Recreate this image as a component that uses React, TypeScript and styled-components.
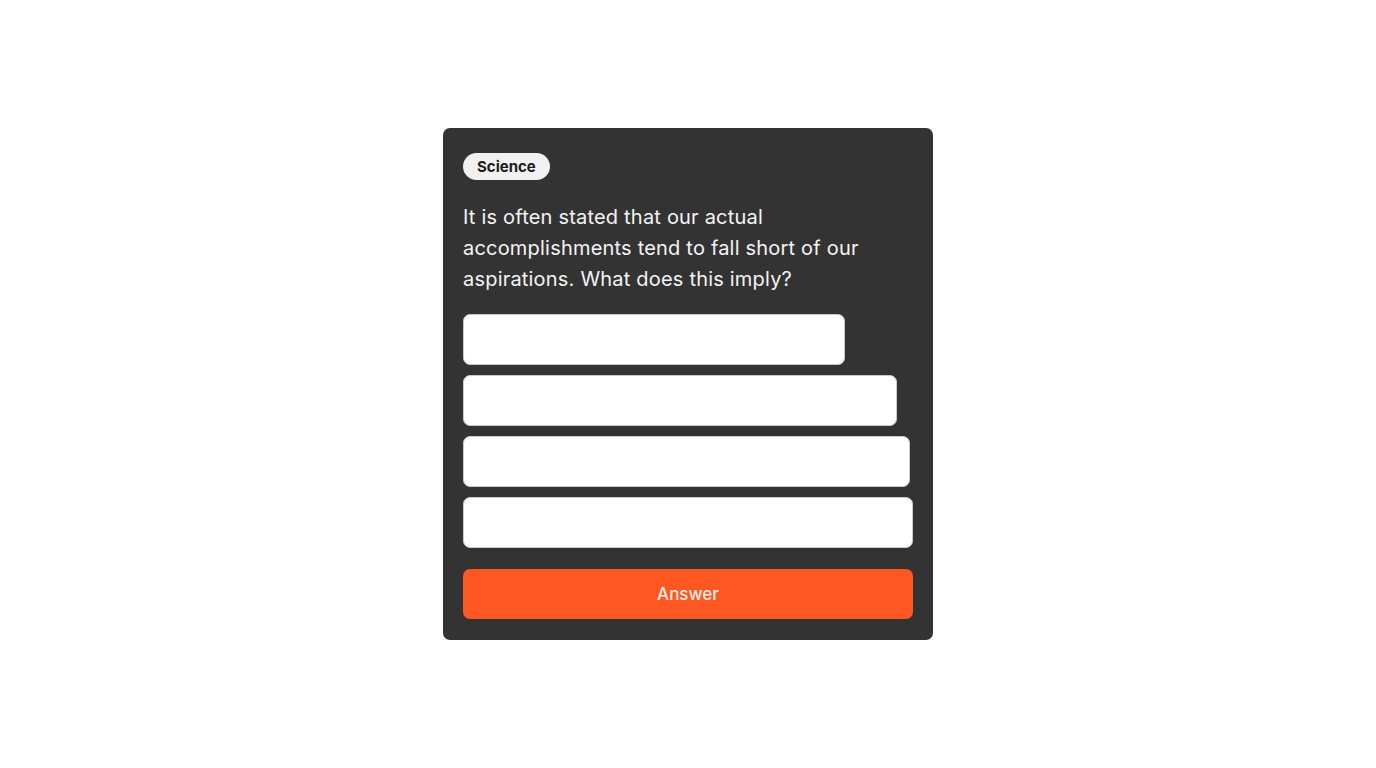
import React from 'react';
import styled, { createGlobalStyle } from 'styled-components';

const GlobalStyle = createGlobalStyle`
    html, body {
        margin: 0;
        padding: 0;
        background: #ffffff;
        font-family: Inter, "Noto Sans", sans-serif;
    }
`;

const Page = styled.div`
    min-height: 100vh;
    display: flex;
    align-items: center;
    justify-content: center;
`;

const Card = styled.div`
    width: 490px;
    box-sizing: border-box;
    padding: 25px 20px 21px 20px;
    background-color: #333333;
    border-radius: 7px;
    display: flex;
    flex-direction: column;
    align-items: flex-start;
`;

const Tag = styled.span`
    height: 27px;
    box-sizing: border-box;
    padding: 0 14px;
    display: inline-flex;
    align-items: center;
    border-radius: 14px;
    background-color: #f1f1f1;
    color: #1c1c1c;
    font-size: 15px;
    font-weight: 700;
`;

const Question = styled.p`
    margin: 22px 0 19px 0;
    color: #f4f4f4;
    font-size: 20px;
    line-height: 31px;
    font-weight: 400;
    letter-spacing: 0.2px;
`;

const Options = styled.div`
    display: flex;
    flex-direction: column;
    gap: 10px;
    width: 100%;
`;

const Option = styled.input<{ $width: number }>`
    width: ${(p) => p.$width}px;
    height: 51px;
    box-sizing: border-box;
    border: 1px solid #c8c8c8;
    border-radius: 7px;
    background: #ffffff;
    font-family: inherit;
    font-size: 16px;
    padding: 0 14px;
    outline: none;
`;

const AnswerButton = styled.button`
    margin-top: 21px;
    width: 100%;
    height: 50px;
    border: none;
    border-radius: 7px;
    background-color: #ff5722;
    color: #fbeee8;
    font-family: inherit;
    font-size: 17px;
    font-weight: 500;
    cursor: pointer;
`;

const optionWidths = [382, 434, 447, 450];

export default function App() {
    return (
        <Page>
            <GlobalStyle />
            <Card>
                <Tag>Science</Tag>
                <Question>
                    It is often stated that our actual accomplishments tend to fall short of our aspirations. What
                    does this imply?
                </Question>
                <Options>
                    {optionWidths.map((w, i) => (
                        <Option key={i} $width={w} type="text" />
                    ))}
                </Options>
                <AnswerButton>Answer</AnswerButton>
            </Card>
        </Page>
    );
}
